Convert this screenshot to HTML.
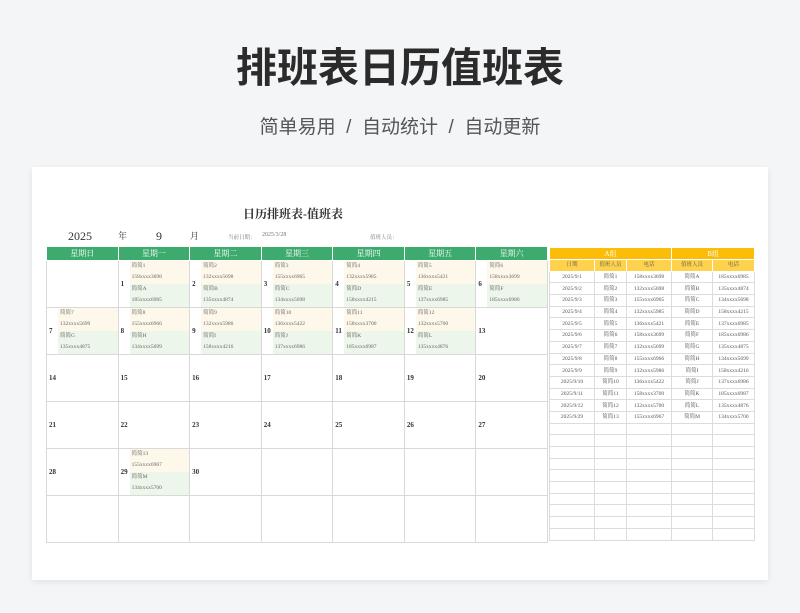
<!DOCTYPE html>
<html><head><meta charset="utf-8"><style>
*{margin:0;padding:0;box-sizing:border-box}
body{width:800px;height:613px;background:#f4f5f7;position:relative;overflow:hidden;font-family:"Liberation Serif","Noto Serif CJK SC",serif;color:#333}
.t{position:absolute;left:0;width:800px;text-align:center;font-family:"Liberation Sans","Noto Sans CJK SC",sans-serif}
#h1{top:34px;font-size:41px;font-weight:bold;color:#2b2b2b;letter-spacing:0px}
#h2{top:112px;font-size:19px;color:#555}
#card{position:absolute;left:32px;top:167px;width:736px;height:413px;background:#fff;box-shadow:0 2px 6px rgba(0,0,0,.08)}
.a{position:absolute;white-space:nowrap}
table{border-collapse:collapse;table-layout:fixed;position:absolute}
#cal{left:46px;top:247px;width:502px}
#cal td{border:1px solid #d9d9d9;height:47px;vertical-align:middle;font-size:7px;font-weight:bold;padding:0;position:relative}
#cal th{background:#3dab6e;color:#fff;font-weight:normal;font-size:8px;height:13px;border:1px solid #fff;border-top:0}
.c{display:flex;align-items:center;height:46px}
.d{width:11px;padding-left:2px;font-size:7px}
.e{flex:1;font-weight:normal;font-size:5.5px;color:#666;line-height:11.5px}
.e div{padding-left:2px}
.y{background:#fdf8ea}.g{background:#ecf6ea}
.n{padding-left:2px}
#rt{left:549px;top:247px;width:205px}
#rt td,#rt th{border:1px solid #dcdcdc;height:11.7px;font-size:5.5px;text-align:center;font-weight:normal;color:#555;padding:0;line-height:10px}
#rt .ga th{background:#fbbd08;color:#fff;height:12px;border-color:#fff;font-size:7px}
#rt .sa th{background:#ffd24d;color:#555;border-color:#fff}
</style></head><body>
<div class="t" id="h1">排班表日历值班表</div>
<div class="t" id="h2">简单易用 &nbsp;/&nbsp; 自动统计 &nbsp;/&nbsp; 自动更新</div>
<div id="card"></div>
<div class="a" style="left:243px;top:205px;font-size:12px;font-weight:bold">日历排班表-值班表</div>
<div class="a" style="left:68px;top:229px;font-size:12px">2025</div>
<div class="a" style="left:118px;top:229px;font-size:9px">年</div>
<div class="a" style="left:156px;top:229px;font-size:12px">9</div>
<div class="a" style="left:190px;top:229px;font-size:9px">月</div>
<div class="a" style="left:228px;top:233px;font-size:5.5px;color:#777">当前日期：</div>
<div class="a" style="left:262px;top:232px;font-size:6px;color:#777">2025/3/28</div>
<div class="a" style="left:370px;top:233px;font-size:5.5px;color:#777">值班人员：</div>

<table id="cal">
<tr><th>星期日</th><th>星期一</th><th>星期二</th><th>星期三</th><th>星期四</th><th>星期五</th><th>星期六</th></tr>
<tr>
<td></td>
<td><div class="c"><div class="d">1</div><div class="e"><div class="y">简简1</div><div class="y">158xxxx3698</div><div class="g">简简A</div><div class="g">185xxxx6985</div></div></div></td>
<td><div class="c"><div class="d">2</div><div class="e"><div class="y">简简2</div><div class="y">132xxxx5698</div><div class="g">简简B</div><div class="g">135xxxx4874</div></div></div></td>
<td><div class="c"><div class="d">3</div><div class="e"><div class="y">简简3</div><div class="y">155xxxx6965</div><div class="g">简简C</div><div class="g">134xxxx5698</div></div></div></td>
<td><div class="c"><div class="d">4</div><div class="e"><div class="y">简简4</div><div class="y">132xxxx5985</div><div class="g">简简D</div><div class="g">158xxxx4215</div></div></div></td>
<td><div class="c"><div class="d">5</div><div class="e"><div class="y">简简5</div><div class="y">136xxxx5421</div><div class="g">简简E</div><div class="g">137xxxx6985</div></div></div></td>
<td><div class="c"><div class="d">6</div><div class="e"><div class="y">简简6</div><div class="y">158xxxx3699</div><div class="g">简简F</div><div class="g">185xxxx6986</div></div></div></td>
</tr>
<tr>
<td><div class="c"><div class="d">7</div><div class="e"><div class="y">简简7</div><div class="y">132xxxx5699</div><div class="g">简简G</div><div class="g">135xxxx4875</div></div></div></td>
<td><div class="c"><div class="d">8</div><div class="e"><div class="y">简简8</div><div class="y">155xxxx6966</div><div class="g">简简H</div><div class="g">134xxxx5699</div></div></div></td>
<td><div class="c"><div class="d">9</div><div class="e"><div class="y">简简9</div><div class="y">132xxxx5986</div><div class="g">简简I</div><div class="g">158xxxx4216</div></div></div></td>
<td><div class="c"><div class="d">10</div><div class="e"><div class="y">简简10</div><div class="y">136xxxx5422</div><div class="g">简简J</div><div class="g">137xxxx6986</div></div></div></td>
<td><div class="c"><div class="d">11</div><div class="e"><div class="y">简简11</div><div class="y">158xxxx3700</div><div class="g">简简K</div><div class="g">185xxxx6987</div></div></div></td>
<td><div class="c"><div class="d">12</div><div class="e"><div class="y">简简12</div><div class="y">132xxxx5700</div><div class="g">简简L</div><div class="g">135xxxx4876</div></div></div></td>
<td><span class="n">13</span></td>
</tr>
<tr><td><span class="n">14</span></td><td><span class="n">15</span></td><td><span class="n">16</span></td><td><span class="n">17</span></td><td><span class="n">18</span></td><td><span class="n">19</span></td><td><span class="n">20</span></td></tr>
<tr><td><span class="n">21</span></td><td><span class="n">22</span></td><td><span class="n">23</span></td><td><span class="n">24</span></td><td><span class="n">25</span></td><td><span class="n">26</span></td><td><span class="n">27</span></td></tr>
<tr><td><span class="n">28</span></td>
<td><div class="c"><div class="d">29</div><div class="e"><div class="y">简简13</div><div class="y">155xxxx6967</div><div class="g">简简M</div><div class="g">134xxxx5700</div></div></div></td>
<td><span class="n">30</span></td><td></td><td></td><td></td><td></td></tr>
<tr><td></td><td></td><td></td><td></td><td></td><td></td><td></td></tr>
</table>

<table id="rt">
<colgroup><col style="width:45px"><col style="width:32px"><col style="width:45px"><col style="width:41px"><col style="width:42px"></colgroup>
<tr class="ga"><th colspan="3">A组</th><th colspan="2">B组</th></tr>
<tr class="sa"><th>日期</th><th>值班人员</th><th>电话</th><th>值班人员</th><th>电话</th></tr>
<tr><td>2025/9/1</td><td>简简1</td><td>158xxxx3698</td><td>简简A</td><td>185xxxx6985</td></tr>
<tr><td>2025/9/2</td><td>简简2</td><td>132xxxx5698</td><td>简简B</td><td>135xxxx4874</td></tr>
<tr><td>2025/9/3</td><td>简简3</td><td>155xxxx6965</td><td>简简C</td><td>134xxxx5698</td></tr>
<tr><td>2025/9/4</td><td>简简4</td><td>132xxxx5985</td><td>简简D</td><td>158xxxx4215</td></tr>
<tr><td>2025/9/5</td><td>简简5</td><td>136xxxx5421</td><td>简简E</td><td>137xxxx6985</td></tr>
<tr><td>2025/9/6</td><td>简简6</td><td>158xxxx3699</td><td>简简F</td><td>185xxxx6986</td></tr>
<tr><td>2025/9/7</td><td>简简7</td><td>132xxxx5699</td><td>简简G</td><td>135xxxx4875</td></tr>
<tr><td>2025/9/8</td><td>简简8</td><td>155xxxx6966</td><td>简简H</td><td>134xxxx5699</td></tr>
<tr><td>2025/9/9</td><td>简简9</td><td>132xxxx5986</td><td>简简I</td><td>158xxxx4216</td></tr>
<tr><td>2025/9/10</td><td>简简10</td><td>136xxxx5422</td><td>简简J</td><td>137xxxx6986</td></tr>
<tr><td>2025/9/11</td><td>简简11</td><td>158xxxx3700</td><td>简简K</td><td>185xxxx6987</td></tr>
<tr><td>2025/9/12</td><td>简简12</td><td>132xxxx5700</td><td>简简L</td><td>135xxxx4876</td></tr>
<tr><td>2025/9/29</td><td>简简13</td><td>155xxxx6967</td><td>简简M</td><td>134xxxx5700</td></tr>
<tr><td></td><td></td><td></td><td></td><td></td></tr>
<tr><td></td><td></td><td></td><td></td><td></td></tr>
<tr><td></td><td></td><td></td><td></td><td></td></tr>
<tr><td></td><td></td><td></td><td></td><td></td></tr>
<tr><td></td><td></td><td></td><td></td><td></td></tr>
<tr><td></td><td></td><td></td><td></td><td></td></tr>
<tr><td></td><td></td><td></td><td></td><td></td></tr>
<tr><td></td><td></td><td></td><td></td><td></td></tr>
<tr><td></td><td></td><td></td><td></td><td></td></tr>
<tr><td></td><td></td><td></td><td></td><td></td></tr>
</table>
</body></html>
